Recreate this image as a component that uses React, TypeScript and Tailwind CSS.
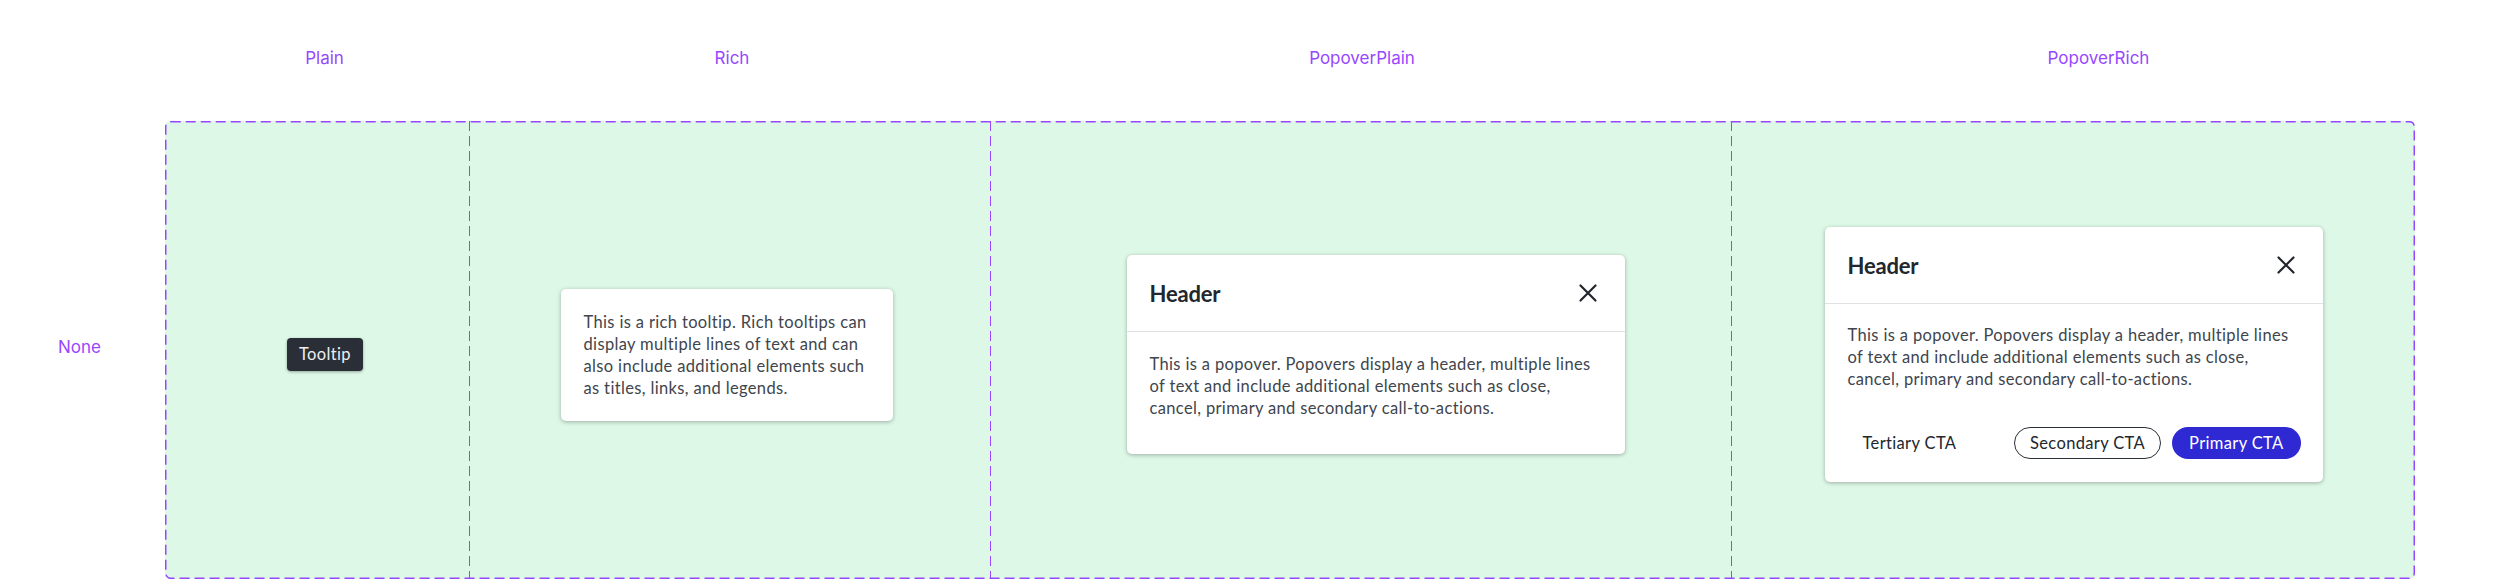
import React from "react";

const dashV =
  "w-px self-stretch bg-[repeating-linear-gradient(to_bottom,#9747ff_0px,#9747ff_10px,transparent_10px,transparent_15px)]";

function CloseIcon() {
  return (
    <svg width="18" height="18" viewBox="0 0 18 18" fill="none">
      <path d="M1.5 1.5L16.5 16.5M16.5 1.5L1.5 16.5" stroke="#22262c" strokeWidth="2.2" strokeLinecap="round" />
    </svg>
  );
}

function PopoverHeader() {
  return (
    <div className="h-[77px] flex items-center justify-between pl-[23px] pr-[28px] border-b border-[#dfe2e5]">
      <span className="text-[22px] font-bold text-[#22272e] tracking-[-0.2px]">Header</span>
      <CloseIcon />
    </div>
  );
}

const bodyText =
  "This is a popover. Popovers display a header, multiple lines of text and include additional elements such as close, cancel, primary and secondary call-to-actions.";

export default function App() {
  return (
    <div className="w-[2500px] h-[579px] bg-white overflow-hidden font-['Lato',sans-serif]">
      <div className="h-[121px] flex pl-[165px] pt-[48px] text-[17px] leading-[20px] text-[#9747ff] font-['Inter',sans-serif]">
        <div className="w-[305px] flex justify-center pl-[14px]">Plain</div>
        <div className="w-[521px] flex justify-center pl-[3px]">Rich</div>
        <div className="w-[741px] flex justify-center pl-[1px]">PopoverPlain</div>
        <div className="w-[683px] flex justify-center pl-[50px]">PopoverRich</div>
      </div>
      <div className="flex">
        <div className="w-[165px] h-[458px] flex items-center justify-center pr-[6px] pb-[4px] text-[17px] text-[#9747ff] font-['Inter',sans-serif]">
          None
        </div>
        <div className="relative w-[2250px] h-[458px] flex bg-[#ddf8e7] rounded-[5px]">
          <svg className="absolute inset-0 pointer-events-none" width="2250" height="458">
            <rect x="0.75" y="0.75" width="2248.5" height="456.5" rx="5" fill="none" stroke="#9747ff" strokeWidth="1.5" strokeDasharray="10 5" />
          </svg>
          {/* Plain */}
          <div className="w-[304px] flex items-center justify-center pl-[16px] pt-[9px]">
            <div className="h-[33px] px-[12px] flex items-center rounded-[4px] bg-[#2a2f37] text-[#eceef0] text-[16.5px] tracking-[0.35px] shadow-[0_1px_3px_rgba(0,0,0,0.35)]">
              Tooltip
            </div>
          </div>
          <div className={dashV} />
          {/* Rich */}
          <div className="w-[520px] flex items-center justify-center pr-[7px] pt-[9px]">
            <div className="w-[332px] px-[23px] py-[22px] rounded-[5px] bg-white text-[#40454d] text-[16.5px] tracking-[0.35px] leading-[22px] shadow-[0_1px_4px_rgba(0,0,0,0.3)]">
              This is a rich tooltip. Rich tooltips can display multiple lines of text and can also include additional elements such as titles, links, and legends.
            </div>
          </div>
          <div className={dashV} />
          {/* PopoverPlain */}
          <div className="w-[740px] flex items-center justify-center pl-[29px] pt-[9px]">
            <div className="w-[498px] h-[199px] rounded-[5px] bg-white shadow-[0_1px_4px_rgba(0,0,0,0.3)] flex flex-col">
              <PopoverHeader />
              <div className="px-[23px] pt-[21px] text-[16.5px] tracking-[0.35px] leading-[22px] text-[#40454d]">{bodyText}</div>
            </div>
          </div>
          <div className={dashV} />
          {/* PopoverRich */}
          <div className="w-[683px] flex items-center justify-center pt-[9px]">
            <div className="w-[498px] h-[255px] rounded-[5px] bg-white shadow-[0_1px_4px_rgba(0,0,0,0.3)] flex flex-col">
              <PopoverHeader />
              <div className="px-[23px] pt-[20px] text-[16.5px] tracking-[0.35px] leading-[22px] text-[#40454d]">{bodyText}</div>
              <div className="mt-auto mb-[23px] px-[22px] flex items-center text-[16.5px] tracking-[0.35px]">
                <button className="h-[32px] px-[16px] text-[#22272e]">Tertiary CTA</button>
                <div className="flex-1" />
                <button className="h-[32px] px-[15px] rounded-full border-[1.5px] border-[#2a2f37] text-[#22272e]">
                  Secondary CTA
                </button>
                <button className="ml-[11px] h-[32px] px-[17px] rounded-full bg-[#2f29d3] text-white">
                  Primary CTA
                </button>
              </div>
            </div>
          </div>
        </div>
      </div>
    </div>
  );
}
